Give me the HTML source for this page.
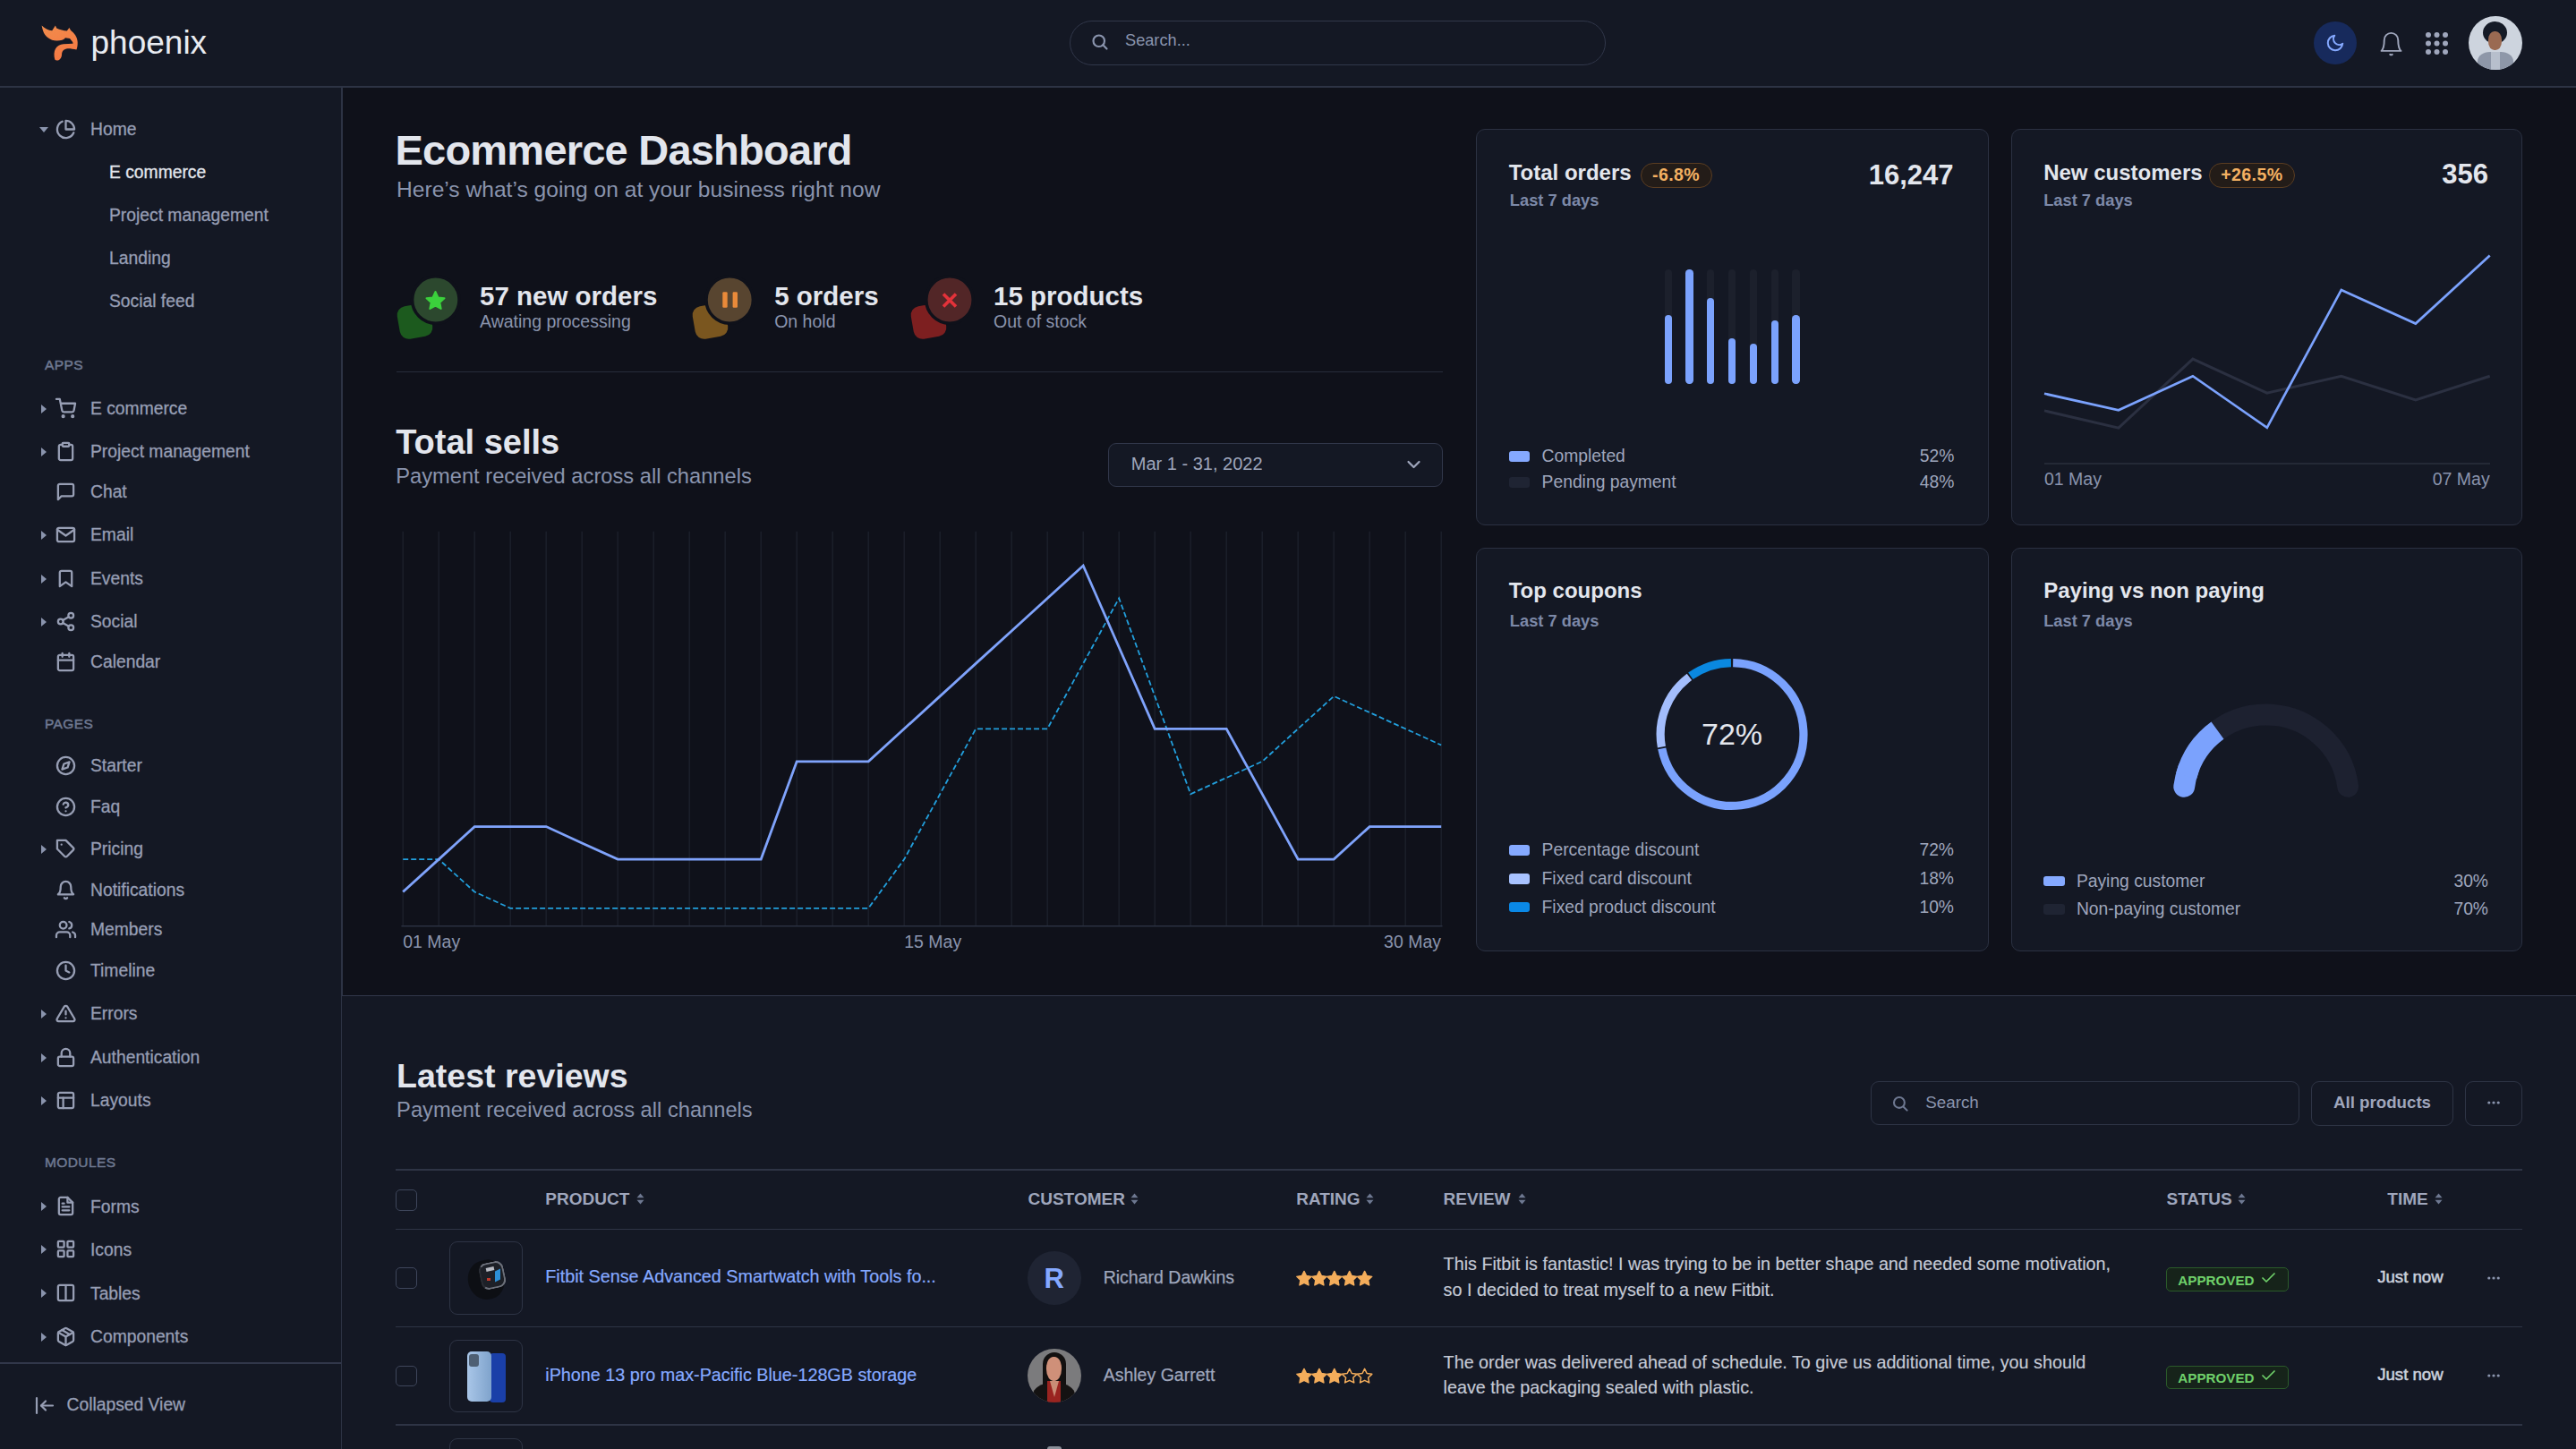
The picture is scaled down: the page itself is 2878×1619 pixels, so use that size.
<!DOCTYPE html>
<html><head><meta charset="utf-8">
<style>
*{margin:0;padding:0;box-sizing:border-box}
html,body{width:2878px;height:1619px;overflow:hidden;background:#0f111a;font-family:"Liberation Sans",sans-serif;color:#9fa6bc}
.a{position:absolute;white-space:nowrap;line-height:1}
svg{position:absolute;overflow:visible}
.ic{fill:none;stroke:#979eb4;stroke-width:2.4;stroke-linecap:round;stroke-linejoin:round}
#top{position:absolute;left:0;top:0;width:2878px;height:97.5px;background:#141824;border-bottom:2px solid #2d3344}
#side{position:absolute;left:0;top:97.5px;width:382.5px;height:1522px;background:#141824;border-right:2px solid #2d3344}
.nv{position:absolute;left:101px;font-size:19.3px;line-height:1;color:#979eb4;white-space:nowrap;-webkit-text-stroke:0.3px #979eb4}
.sub{position:absolute;left:122px;font-size:19.3px;line-height:1;color:#979eb4;white-space:nowrap;-webkit-text-stroke:0.3px #979eb4}
.hd{position:absolute;left:50px;font-size:15.5px;line-height:1;color:#6e7891;white-space:nowrap;letter-spacing:0.4px;-webkit-text-stroke:0.5px #6e7891}
.car{position:absolute;left:46px;width:0;height:0;border-top:5px solid transparent;border-bottom:5px solid transparent;border-left:6px solid #8a94ad}
.sico{position:absolute;left:62px;width:23px;height:23px}
</style></head>
<body>
<!-- TOP BAR -->
<div id="top"></div>
<!-- logo -->
<svg style="left:0;top:0" width="100" height="80" viewBox="0 0 100 80">
 <defs><linearGradient id="lg" x1="0" y1="0" x2="0.4" y2="1"><stop offset="0" stop-color="#f08c4c"/><stop offset="1" stop-color="#f67a44"/></linearGradient></defs>
 <path fill="url(#lg)" d="M46.6,28.6 C50,32 54,34 58.2,34.3 L61.9,28.6 L63.2,31.6 C67,33.3 71,34.3 74.8,34.6 L77.4,31 L79.1,33.9 C83,37 86.5,41 86.7,47 C86.8,51 86.3,53.5 85.4,55.5 C82,54.6 78,54 75.5,54.2 C71.5,54.6 69.2,57 69.1,60.5 C69,64 67.5,66.3 65.5,67.3 C63.5,67.8 62,67.5 61.3,66.5 C60,62 60.3,57.5 62,54.5 C64,51 67,49.6 71,49.3 L81.5,48.7 C81.5,47.5 81,46.5 80,45.5 L78,43 L73,42.3 C71.5,44.5 68,45.6 63.5,45.6 C56,45.6 50,40 48.5,35.5 C47.5,33 47,30.5 46.6,28.6 Z"/>
</svg>
<div class="a" style="left:101.5px;top:29px;font-size:37px;color:#e8ebf1;letter-spacing:0px">phoenix</div>
<!-- search -->
<div style="position:absolute;left:1195px;top:23px;width:599px;height:50px;border:1.5px solid #31374a;border-radius:25px;background:#141824"></div>
<svg class="ic" style="left:1219px;top:37px;stroke:#8a94ad;stroke-width:2.6" width="20" height="20" viewBox="0 0 24 24"><circle cx="10.5" cy="10.5" r="7.5"/><line x1="21" y1="21" x2="16" y2="16"/></svg>
<div class="a" style="left:1257px;top:36px;font-size:18.2px;color:#8a94ad">Search...</div>
<!-- right icons -->
<div style="position:absolute;left:2585px;top:24px;width:48px;height:48px;border-radius:50%;background:#172a5c"></div>
<svg class="ic" style="left:2598px;top:37px;stroke:#85a9ff;stroke-width:2.2" width="22" height="22" viewBox="0 0 24 24"><path d="M21 12.79A9 9 0 1 1 11.21 3 7 7 0 0 0 21 12.79z"/></svg>
<svg class="ic" style="left:2656px;top:33px;stroke:#9fa6bc;stroke-width:1.5" width="31" height="31" viewBox="0 0 24 24"><path d="M18 9A6 6 0 0 0 6 9c0 7-1.5 8.5-2.5 9.5h17c-1-1-2.5-2.5-2.5-9.5"/><path d="M13 21.5a1.5 1.5 0 0 1-2 0"/></svg>
<svg style="left:2710px;top:36px" width="25" height="25" viewBox="0 0 25 25" fill="#9fa6bc">
 <circle cx="3" cy="3" r="3"/><circle cx="12.5" cy="3" r="3"/><circle cx="22" cy="3" r="3"/>
 <circle cx="3" cy="12.5" r="3"/><circle cx="12.5" cy="12.5" r="3"/><circle cx="22" cy="12.5" r="3"/>
 <circle cx="3" cy="22" r="3"/><circle cx="12.5" cy="22" r="3"/><circle cx="22" cy="22" r="3"/>
</svg>
<div style="position:absolute;left:2758px;top:18px;width:60px;height:60px;border-radius:50%;background:#cdd4de;overflow:hidden">
 <div style="position:absolute;left:16px;top:6px;width:27px;height:25px;border-radius:50%;background:#141a26"></div>
 <div style="position:absolute;left:22px;top:17px;width:15px;height:21px;border-radius:45%;background:#9a6a52"></div>
 <div style="position:absolute;left:10px;top:40px;width:40px;height:30px;border-radius:35% 35% 0 0;background:#8e97a8"></div>
 <div style="position:absolute;left:25px;top:40px;width:10px;height:22px;background:#b7bfcc"></div>
</div>
</div>

<!-- SIDEBAR -->
<div id="side"></div>
<div class="nv" style="top:135.1px">Home</div>
<svg class="ic sico" style="top:132.9px" viewBox="0 0 24 24"><path d="M21.21 15.89A10 10 0 1 1 8 2.83"/><path d="M22 12A10 10 0 0 0 12 2v10z"/></svg>
<div class="car" style="left:44px;top:141.9px;border-left:5px solid transparent;border-right:5px solid transparent;border-top:6px solid #8a94ad;border-bottom:0"></div>
<div class="sub" style="top:183.1px;color:#e3e6ed;-webkit-text-stroke-color:#e3e6ed">E commerce</div>
<div class="sub" style="top:230.8px">Project management</div>
<div class="sub" style="top:279.1px">Landing</div>
<div class="sub" style="top:326.6px">Social feed</div>
<div class="hd" style="top:399.8px">APPS</div>
<div class="nv" style="top:447.2px">E commerce</div>
<svg class="ic sico" style="top:445.0px" viewBox="0 0 24 24"><circle cx="9" cy="21" r="1"/><circle cx="20" cy="21" r="1"/><path d="M1 1h4l2.68 13.39a2 2 0 0 0 2 1.61h9.72a2 2 0 0 0 2-1.61L23 6H6"/></svg>
<div class="car" style="top:452.0px"></div>
<div class="nv" style="top:495.0px">Project management</div>
<svg class="ic sico" style="top:492.8px" viewBox="0 0 24 24"><path d="M16 4h2a2 2 0 0 1 2 2v14a2 2 0 0 1-2 2H6a2 2 0 0 1-2-2V6a2 2 0 0 1 2-2h2"/><rect x="8" y="2" width="8" height="4" rx="1" ry="1"/></svg>
<div class="car" style="top:499.8px"></div>
<div class="nv" style="top:540.2px">Chat</div>
<svg class="ic sico" style="top:538.0px" viewBox="0 0 24 24"><path d="M21 15a2 2 0 0 1-2 2H7l-4 4V5a2 2 0 0 1 2-2h14a2 2 0 0 1 2 2z"/></svg>
<div class="nv" style="top:587.7px">Email</div>
<svg class="ic sico" style="top:585.5px" viewBox="0 0 24 24"><path d="M4 4h16c1.1 0 2 .9 2 2v12c0 1.1-.9 2-2 2H4c-1.1 0-2-.9-2-2V6c0-1.1.9-2 2-2z"/><polyline points="22,6 12,13 2,6"/></svg>
<div class="car" style="top:592.5px"></div>
<div class="nv" style="top:636.7px">Events</div>
<svg class="ic sico" style="top:634.5px" viewBox="0 0 24 24"><path d="M19 21l-7-5-7 5V5a2 2 0 0 1 2-2h10a2 2 0 0 1 2 2z"/></svg>
<div class="car" style="top:641.5px"></div>
<div class="nv" style="top:685.2px">Social</div>
<svg class="ic sico" style="top:683.0px" viewBox="0 0 24 24"><circle cx="18" cy="5" r="3"/><circle cx="6" cy="12" r="3"/><circle cx="18" cy="19" r="3"/><line x1="8.59" y1="13.51" x2="15.42" y2="17.49"/><line x1="15.41" y1="6.51" x2="8.59" y2="10.49"/></svg>
<div class="car" style="top:690.0px"></div>
<div class="nv" style="top:729.8px">Calendar</div>
<svg class="ic sico" style="top:727.6px" viewBox="0 0 24 24"><rect x="3" y="4" width="18" height="18" rx="2" ry="2"/><line x1="16" y1="2" x2="16" y2="6"/><line x1="8" y1="2" x2="8" y2="6"/><line x1="3" y1="10" x2="21" y2="10"/></svg>
<div class="hd" style="top:801.1px">PAGES</div>
<div class="nv" style="top:846.1px">Starter</div>
<svg class="ic sico" style="top:843.9px" viewBox="0 0 24 24"><circle cx="12" cy="12" r="10"/><polygon points="16.24 7.76 14.12 14.12 7.76 16.24 9.88 9.88 16.24 7.76"/></svg>
<div class="nv" style="top:892.1px">Faq</div>
<svg class="ic sico" style="top:889.9px" viewBox="0 0 24 24"><circle cx="12" cy="12" r="10"/><path d="M9.09 9a3 3 0 0 1 5.83 1c0 2-3 3-3 3"/><line x1="12" y1="17" x2="12.01" y2="17"/></svg>
<div class="nv" style="top:939.4px">Pricing</div>
<svg class="ic sico" style="top:937.2px" viewBox="0 0 24 24"><path d="M20.59 13.41l-7.17 7.17a2 2 0 0 1-2.83 0L2 12V2h10l8.59 8.59a2 2 0 0 1 0 2.82z"/><line x1="7" y1="7" x2="7.01" y2="7"/></svg>
<div class="car" style="top:944.2px"></div>
<div class="nv" style="top:984.8px">Notifications</div>
<svg class="ic sico" style="top:982.6px" viewBox="0 0 24 24"><path d="M18 8A6 6 0 0 0 6 8c0 7-3 9-3 9h18s-3-2-3-9"/><path d="M13.73 21a2 2 0 0 1-3.46 0"/></svg>
<div class="nv" style="top:1029.3px">Members</div>
<svg class="ic sico" style="top:1027.1px" viewBox="0 0 24 24"><path d="M17 21v-2a4 4 0 0 0-4-4H5a4 4 0 0 0-4 4v2"/><circle cx="9" cy="7" r="4"/><path d="M23 21v-2a4 4 0 0 0-3-3.87"/><path d="M16 3.13a4 4 0 0 1 0 7.75"/></svg>
<div class="nv" style="top:1074.7px">Timeline</div>
<svg class="ic sico" style="top:1072.5px" viewBox="0 0 24 24"><circle cx="12" cy="12" r="10"/><polyline points="12 6 12 12 16 14"/></svg>
<div class="nv" style="top:1122.9px">Errors</div>
<svg class="ic sico" style="top:1120.7px" viewBox="0 0 24 24"><path d="M10.29 3.86L1.82 18a2 2 0 0 0 1.71 3h16.94a2 2 0 0 0 1.71-3L13.71 3.86a2 2 0 0 0-3.42 0z"/><line x1="12" y1="9" x2="12" y2="13"/><line x1="12" y1="17" x2="12.01" y2="17"/></svg>
<div class="car" style="top:1127.7px"></div>
<div class="nv" style="top:1172.1px">Authentication</div>
<svg class="ic sico" style="top:1169.9px" viewBox="0 0 24 24"><rect x="3" y="11" width="18" height="11" rx="2" ry="2"/><path d="M7 11V7a5 5 0 0 1 10 0v4"/></svg>
<div class="car" style="top:1176.9px"></div>
<div class="nv" style="top:1219.7px">Layouts</div>
<svg class="ic sico" style="top:1217.5px" viewBox="0 0 24 24"><rect x="3" y="3" width="18" height="18" rx="2" ry="2"/><line x1="3" y1="9" x2="21" y2="9"/><line x1="9" y1="21" x2="9" y2="9"/></svg>
<div class="car" style="top:1224.5px"></div>
<div class="hd" style="top:1291.0px">MODULES</div>
<div class="nv" style="top:1338.5px">Forms</div>
<svg class="ic sico" style="top:1336.3px" viewBox="0 0 24 24"><path d="M14 2H6a2 2 0 0 0-2 2v16a2 2 0 0 0 2 2h12a2 2 0 0 0 2-2V8z"/><polyline points="14 2 14 8 20 8"/><line x1="16" y1="13" x2="8" y2="13"/><line x1="16" y1="17" x2="8" y2="17"/><polyline points="10 9 9 9 8 9"/></svg>
<div class="car" style="top:1343.3px"></div>
<div class="nv" style="top:1386.6px">Icons</div>
<svg class="ic sico" style="top:1384.4px" viewBox="0 0 24 24"><rect x="3" y="3" width="7" height="7" rx="1"/><rect x="14" y="3" width="7" height="7" rx="1"/><rect x="14" y="14" width="7" height="7" rx="1"/><rect x="3" y="14" width="7" height="7" rx="1"/></svg>
<div class="car" style="top:1391.4px"></div>
<div class="nv" style="top:1435.5px">Tables</div>
<svg class="ic sico" style="top:1433.3px" viewBox="0 0 24 24"><path d="M12 3h7a2 2 0 0 1 2 2v14a2 2 0 0 1-2 2h-7m0-18H5a2 2 0 0 0-2 2v14a2 2 0 0 0 2 2h7m0-18v18"/></svg>
<div class="car" style="top:1440.3px"></div>
<div class="nv" style="top:1483.7px">Components</div>
<svg class="ic sico" style="top:1481.5px" viewBox="0 0 24 24"><line x1="16.5" y1="9.4" x2="7.5" y2="4.21"/><path d="M21 16V8a2 2 0 0 0-1-1.73l-7-4a2 2 0 0 0-2 0l-7 4A2 2 0 0 0 3 8v8a2 2 0 0 0 1 1.73l7 4a2 2 0 0 0 2 0l7-4A2 2 0 0 0 21 16z"/><polyline points="3.27 6.96 12 12.01 20.73 6.96"/><line x1="12" y1="22.08" x2="12" y2="12"/></svg>
<div class="car" style="top:1488.5px"></div>
<div style="position:absolute;left:0;top:1522px;width:381px;height:1.5px;background:#31374a"></div>
<svg class="ic" style="left:39px;top:1560px;stroke-width:2.2" width="21" height="21" viewBox="0 0 21 21"><line x1="2" y1="2" x2="2" y2="19"/><line x1="7" y1="10.5" x2="20" y2="10.5"/><polyline points="12,5.5 7,10.5 12,15.5"/></svg>
<div class="nv" style="left:74.5px;top:1560.0px">Collapsed View</div>
<div style="position:absolute;left:382px;top:1111.5px;width:2496px;height:508px;background:#141824;border-top:1.5px solid #31374a"></div>
<div class="a" style="left:441.5px;top:143.8px;font-size:47px;color:#e3e6ed;font-weight:bold;letter-spacing:-0.78px;">Ecommerce Dashboard</div>
<div class="a" style="left:443px;top:200.4px;font-size:24.6px;color:#8a94ad;">Here’s what’s going on at your business right now</div>
<svg style="left:412px;top:294.5px" width="100" height="100" viewBox="412 294.5 100 100"><rect x="445" y="340" width="37" height="37" rx="10" fill="#1c5a1e" transform="rotate(-10 463.5 358.5)"/><circle cx="486.8" cy="334.5" r="26.2" fill="#2c482e" stroke="#0f111a" stroke-width="3.5"/><polygon points="486.50,325.50 489.46,331.92 496.49,332.76 491.29,337.56 492.67,344.49 486.50,341.04 480.33,344.49 481.71,337.56 476.51,332.76 483.54,331.92" fill="#3bd13c" stroke="#3bd13c" stroke-width="2" stroke-linejoin="round"/></svg>
<div class="a" style="left:536px;top:316.0px;font-size:29.5px;color:#e3e6ed;font-weight:bold;">57 new orders</div>
<div class="a" style="left:536px;top:349.8px;font-size:19.5px;color:#8a94ad;">Awating processing</div>
<svg style="left:742px;top:294.5px" width="100" height="100" viewBox="742 294.5 100 100"><rect x="775" y="340" width="37" height="37" rx="10" fill="#7a561f" transform="rotate(-10 793.5 358.5)"/><circle cx="815.2" cy="334.5" r="26.2" fill="#584530" stroke="#0f111a" stroke-width="3.5"/><rect x="807.3" y="325.8" width="5.4" height="17.5" rx="1.2" fill="#e98a3a"/><rect x="818.6" y="325.8" width="5.4" height="17.5" rx="1.2" fill="#e98a3a"/></svg>
<div class="a" style="left:865.2px;top:316.0px;font-size:29.5px;color:#e3e6ed;font-weight:bold;">5 orders</div>
<div class="a" style="left:865.2px;top:349.8px;font-size:19.5px;color:#8a94ad;">On hold</div>
<svg style="left:986px;top:294.5px" width="100" height="100" viewBox="986 294.5 100 100"><rect x="1019" y="340" width="37" height="37" rx="10" fill="#7d1f20" transform="rotate(-10 1037.5 358.5)"/><circle cx="1061" cy="334.5" r="26.2" fill="#522627" stroke="#0f111a" stroke-width="3.5"/><path d="M1054 328 L1068 342 M1068 328 L1054 342" stroke="#e3323a" stroke-width="3.6" stroke-linecap="butt"/></svg>
<div class="a" style="left:1110px;top:316.0px;font-size:29.5px;color:#e3e6ed;font-weight:bold;">15 products</div>
<div class="a" style="left:1110px;top:349.8px;font-size:19.5px;color:#8a94ad;">Out of stock</div>
<div style="position:absolute;left:442.6px;top:414.8px;width:1169px;height:1.5px;background:#272d3b"></div>
<div class="a" style="left:442.2px;top:474.6px;font-size:38px;color:#e3e6ed;font-weight:bold;">Total sells</div>
<div class="a" style="left:442.2px;top:520.6px;font-size:23.7px;color:#8a94ad;">Payment received across all channels</div>
<div style="position:absolute;left:1238px;top:494.8px;width:374px;height:49px;border:1.5px solid #31374a;border-radius:9px;background:#141824"></div>
<div class="a" style="left:1263.8px;top:508.1px;font-size:20px;color:#9fa6bc;">Mar 1 - 31, 2022</div>
<svg class="ic" style="left:1572px;top:514px;stroke:#9fa6bc;stroke-width:2.2" width="15" height="10" viewBox="0 0 15 10"><polyline points="1.5,2 7.5,8 13.5,2"/></svg>
<svg style="left:430px;top:580px" width="1200" height="470" viewBox="430 580 1200 470"><line x1="450.2" y1="593.8" x2="450.2" y2="1034" stroke="#1c202b" stroke-width="1.5"/><line x1="490.2" y1="593.8" x2="490.2" y2="1034" stroke="#1c202b" stroke-width="1.5"/><line x1="530.2" y1="593.8" x2="530.2" y2="1034" stroke="#1c202b" stroke-width="1.5"/><line x1="570.2" y1="593.8" x2="570.2" y2="1034" stroke="#1c202b" stroke-width="1.5"/><line x1="610.2" y1="593.8" x2="610.2" y2="1034" stroke="#1c202b" stroke-width="1.5"/><line x1="650.2" y1="593.8" x2="650.2" y2="1034" stroke="#1c202b" stroke-width="1.5"/><line x1="690.2" y1="593.8" x2="690.2" y2="1034" stroke="#1c202b" stroke-width="1.5"/><line x1="730.2" y1="593.8" x2="730.2" y2="1034" stroke="#1c202b" stroke-width="1.5"/><line x1="770.2" y1="593.8" x2="770.2" y2="1034" stroke="#1c202b" stroke-width="1.5"/><line x1="810.2" y1="593.8" x2="810.2" y2="1034" stroke="#1c202b" stroke-width="1.5"/><line x1="850.2" y1="593.8" x2="850.2" y2="1034" stroke="#1c202b" stroke-width="1.5"/><line x1="890.2" y1="593.8" x2="890.2" y2="1034" stroke="#1c202b" stroke-width="1.5"/><line x1="930.2" y1="593.8" x2="930.2" y2="1034" stroke="#1c202b" stroke-width="1.5"/><line x1="970.2" y1="593.8" x2="970.2" y2="1034" stroke="#1c202b" stroke-width="1.5"/><line x1="1010.2" y1="593.8" x2="1010.2" y2="1034" stroke="#1c202b" stroke-width="1.5"/><line x1="1050.2" y1="593.8" x2="1050.2" y2="1034" stroke="#1c202b" stroke-width="1.5"/><line x1="1090.2" y1="593.8" x2="1090.2" y2="1034" stroke="#1c202b" stroke-width="1.5"/><line x1="1130.2" y1="593.8" x2="1130.2" y2="1034" stroke="#1c202b" stroke-width="1.5"/><line x1="1170.2" y1="593.8" x2="1170.2" y2="1034" stroke="#1c202b" stroke-width="1.5"/><line x1="1210.2" y1="593.8" x2="1210.2" y2="1034" stroke="#1c202b" stroke-width="1.5"/><line x1="1250.2" y1="593.8" x2="1250.2" y2="1034" stroke="#1c202b" stroke-width="1.5"/><line x1="1290.2" y1="593.8" x2="1290.2" y2="1034" stroke="#1c202b" stroke-width="1.5"/><line x1="1330.2" y1="593.8" x2="1330.2" y2="1034" stroke="#1c202b" stroke-width="1.5"/><line x1="1370.2" y1="593.8" x2="1370.2" y2="1034" stroke="#1c202b" stroke-width="1.5"/><line x1="1410.2" y1="593.8" x2="1410.2" y2="1034" stroke="#1c202b" stroke-width="1.5"/><line x1="1450.2" y1="593.8" x2="1450.2" y2="1034" stroke="#1c202b" stroke-width="1.5"/><line x1="1490.2" y1="593.8" x2="1490.2" y2="1034" stroke="#1c202b" stroke-width="1.5"/><line x1="1530.2" y1="593.8" x2="1530.2" y2="1034" stroke="#1c202b" stroke-width="1.5"/><line x1="1570.2" y1="593.8" x2="1570.2" y2="1034" stroke="#1c202b" stroke-width="1.5"/><line x1="1610.2" y1="593.8" x2="1610.2" y2="1034" stroke="#1c202b" stroke-width="1.5"/><line x1="448.4" y1="1034.8" x2="1611.5" y2="1034.8" stroke="#2a3040" stroke-width="1.5"/><polyline points="450.2,960.1 490.2,960.1 530.2,996.5 570.2,1014.8 610.2,1014.8 650.2,1014.8 690.2,1014.8 730.2,1014.8 770.2,1014.8 810.2,1014.8 850.2,1014.8 890.2,1014.8 930.2,1014.8 970.2,1014.8 1010.2,960.1 1050.2,887.2 1090.2,814.3 1130.2,814.3 1170.2,814.3 1210.2,741.4 1250.2,668.5 1290.2,777.9 1330.2,887.2 1370.2,869.0 1410.2,850.8 1450.2,814.3 1490.2,777.9 1530.2,796.1 1570.2,814.3 1610.2,832.5" fill="none" stroke="#229fdc" stroke-width="1.8" stroke-dasharray="6 3"/><polyline points="450.2,996.5 490.2,960.1 530.2,923.6 570.2,923.6 610.2,923.6 650.2,941.9 690.2,960.1 730.2,960.1 770.2,960.1 810.2,960.1 850.2,960.1 890.2,850.8 930.2,850.8 970.2,850.8 1010.2,814.3 1050.2,777.9 1090.2,741.4 1130.2,705.0 1170.2,668.5 1210.2,632.0 1250.2,723.2 1290.2,814.3 1330.2,814.3 1370.2,814.3 1410.2,887.2 1450.2,960.1 1490.2,960.1 1530.2,923.6 1570.2,923.6 1610.2,923.6" fill="none" stroke="#7fa3fb" stroke-width="2.8" stroke-linejoin="miter"/></svg>
<div class="a" style="left:450.2px;top:1043.1px;font-size:19.5px;color:#8a94ad;">01 May</div>
<div class="a" style="left:1010.2px;top:1043.1px;font-size:19.5px;color:#8a94ad;">15 May</div>
<div class="a" style="left:1410px;width:200px;text-align:right;top:1043.1px;font-size:19.5px;color:#8a94ad">30 May</div>
<div style="position:absolute;left:1649px;top:144px;width:573px;height:443px;background:#141824;border:1.5px solid #2b3142;border-radius:10px"></div>
<div style="position:absolute;left:2246.5px;top:144px;width:571.5px;height:443px;background:#141824;border:1.5px solid #2b3142;border-radius:10px"></div>
<div style="position:absolute;left:1649px;top:612px;width:573px;height:451px;background:#141824;border:1.5px solid #2b3142;border-radius:10px"></div>
<div style="position:absolute;left:2246.5px;top:612px;width:571.5px;height:451px;background:#141824;border:1.5px solid #2b3142;border-radius:10px"></div>
<div class="a" style="left:1685.7px;top:180.9px;font-size:24px;color:#e3e6ed;font-weight:bold;">Total orders</div>
<div style="position:absolute;left:1832.5px;top:181.6px;width:80.70000000000005px;height:28.3px;border:1.5px solid #5a3d22;border-radius:15px;background:#231c18"></div>
<div class="a" style="left:1846px;top:185.7px;font-size:19.5px;color:#f3b062;font-weight:bold;letter-spacing:0.4px;">-6.8%</div>
<div class="a" style="left:1782.6px;width:400px;text-align:right;top:180.0px;font-size:31px;color:#e3e6ed;font-weight:bold;">16,247</div>
<div class="a" style="left:1686.8px;top:215.2px;font-size:18.3px;color:#7d89a8;font-weight:bold;">Last 7 days</div>
<div style="position:absolute;left:1859.95px;top:300.9px;width:8.3px;height:127.8px;border-radius:4.15px;background:#1c202c"></div>
<div style="position:absolute;left:1859.95px;top:352.1px;width:8.3px;height:76.6px;border-radius:4.15px;background:#7ba2fd"></div>
<div style="position:absolute;left:1883.45px;top:300.9px;width:8.3px;height:127.8px;border-radius:4.15px;background:#1c202c"></div>
<div style="position:absolute;left:1883.45px;top:300.9px;width:8.3px;height:127.8px;border-radius:4.15px;background:#7ba2fd"></div>
<div style="position:absolute;left:1907.05px;top:300.9px;width:8.3px;height:127.8px;border-radius:4.15px;background:#1c202c"></div>
<div style="position:absolute;left:1907.05px;top:333px;width:8.3px;height:95.7px;border-radius:4.15px;background:#7ba2fd"></div>
<div style="position:absolute;left:1930.95px;top:300.9px;width:8.3px;height:127.8px;border-radius:4.15px;background:#1c202c"></div>
<div style="position:absolute;left:1930.95px;top:377.8px;width:8.3px;height:50.9px;border-radius:4.15px;background:#7ba2fd"></div>
<div style="position:absolute;left:1954.75px;top:300.9px;width:8.3px;height:127.8px;border-radius:4.15px;background:#1c202c"></div>
<div style="position:absolute;left:1954.75px;top:384px;width:8.3px;height:44.7px;border-radius:4.15px;background:#7ba2fd"></div>
<div style="position:absolute;left:1978.55px;top:300.9px;width:8.3px;height:127.8px;border-radius:4.15px;background:#1c202c"></div>
<div style="position:absolute;left:1978.55px;top:358.3px;width:8.3px;height:70.4px;border-radius:4.15px;background:#7ba2fd"></div>
<div style="position:absolute;left:2002.35px;top:300.9px;width:8.3px;height:127.8px;border-radius:4.15px;background:#1c202c"></div>
<div style="position:absolute;left:2002.35px;top:352.1px;width:8.3px;height:76.6px;border-radius:4.15px;background:#7ba2fd"></div>
<div style="position:absolute;left:1685.8px;top:503.7px;width:23.7px;height:11.9px;border-radius:3px;background:#85a9ff"></div>
<div class="a" style="left:1722.6px;top:499.7px;font-size:19.3px;color:#9fa6bc;">Completed</div>
<div class="a" style="left:1783.4px;width:400px;text-align:right;top:499.7px;font-size:19.3px;color:#9fa6bc;">52%</div>
<div style="position:absolute;left:1685.8px;top:533.1px;width:23.7px;height:11.9px;border-radius:3px;background:#1f2433"></div>
<div class="a" style="left:1722.6px;top:529.1px;font-size:19.3px;color:#9fa6bc;">Pending payment</div>
<div class="a" style="left:1783.4px;width:400px;text-align:right;top:529.1px;font-size:19.3px;color:#9fa6bc;">48%</div>
<div class="a" style="left:2283.2px;top:180.7px;font-size:24px;color:#e3e6ed;font-weight:bold;">New customers</div>
<div style="position:absolute;left:2468px;top:181.6px;width:95.59999999999991px;height:28.3px;border:1.5px solid #5a3d22;border-radius:15px;background:#231c18"></div>
<div class="a" style="left:2481.3px;top:185.7px;font-size:19.5px;color:#f3b062;font-weight:bold;letter-spacing:0.4px;">+26.5%</div>
<div class="a" style="left:2380px;width:400px;text-align:right;top:179.2px;font-size:31px;color:#e3e6ed;font-weight:bold;">356</div>
<div class="a" style="left:2283.2px;top:215.2px;font-size:18.3px;color:#7d89a8;font-weight:bold;">Last 7 days</div>
<svg style="left:2270px;top:270px" width="530" height="260" viewBox="2270 270 530 260"><line x1="2284" y1="517.9" x2="2782" y2="517.9" stroke="#2a2f3d" stroke-width="1.5"/><polyline points="2284.0,458.9 2366.9,478.2 2449.9,401.1 2532.8,439.1 2615.8,420.2 2698.8,447 2781.7,420.2" fill="none" stroke="#2b3041" stroke-width="3"/><polyline points="2284.0,439.8 2366.9,458.3 2449.9,420.2 2532.8,477.8 2615.8,323.9 2698.8,361.6 2781.7,285.4" fill="none" stroke="#7ba2fd" stroke-width="2.7"/></svg>
<div class="a" style="left:2284px;top:526.1px;font-size:19.5px;color:#8a94ad;">01 May</div>
<div class="a" style="left:2381.7px;width:400px;text-align:right;top:526.1px;font-size:19.5px;color:#8a94ad;">07 May</div>
<div class="a" style="left:1685.7px;top:648.0px;font-size:24px;color:#e3e6ed;font-weight:bold;">Top coupons</div>
<div class="a" style="left:1686.8px;top:684.5px;font-size:18.3px;color:#7d89a8;font-weight:bold;">Last 7 days</div>
<svg style="left:1840px;top:725px" width="190" height="190" viewBox="1840 725 190 190"><path d="M1936.17 740.61 A79.9 79.9 0 1 1 1856.73 836.29" fill="none" stroke="#7aa2fd" stroke-width="9.2"/><path d="M1856.41 834.65 A79.9 79.9 0 0 1 1887.41 756.35" fill="none" stroke="#a3bdfc" stroke-width="9.2"/><path d="M1888.77 755.37 A79.9 79.9 0 0 1 1933.93 740.61" fill="none" stroke="#0a88e0" stroke-width="9.2"/></svg>
<div class="a" style="left:1835px;width:200px;text-align:center;top:803.1px;font-size:34px;color:#e3e6ed">72%</div>
<div style="position:absolute;left:1685.8px;top:944.4px;width:23.7px;height:11.9px;border-radius:3px;background:#85a9ff"></div>
<div class="a" style="left:1722.6px;top:940.4px;font-size:19.3px;color:#9fa6bc;">Percentage discount</div>
<div class="a" style="left:1783px;width:400px;text-align:right;top:940.4px;font-size:19.3px;color:#9fa6bc;">72%</div>
<div style="position:absolute;left:1685.8px;top:976.3px;width:23.7px;height:11.9px;border-radius:3px;background:#a8c2ff"></div>
<div class="a" style="left:1722.6px;top:972.3px;font-size:19.3px;color:#9fa6bc;">Fixed card discount</div>
<div class="a" style="left:1783px;width:400px;text-align:right;top:972.3px;font-size:19.3px;color:#9fa6bc;">18%</div>
<div style="position:absolute;left:1685.8px;top:1007.6px;width:23.7px;height:11.9px;border-radius:3px;background:#0a88e6"></div>
<div class="a" style="left:1722.6px;top:1003.6px;font-size:19.3px;color:#9fa6bc;">Fixed product discount</div>
<div class="a" style="left:1783px;width:400px;text-align:right;top:1003.6px;font-size:19.3px;color:#9fa6bc;">10%</div>
<div class="a" style="left:2283.2px;top:648.0px;font-size:24px;color:#e3e6ed;font-weight:bold;">Paying vs non paying</div>
<div class="a" style="left:2283.2px;top:684.5px;font-size:18.3px;color:#7d89a8;font-weight:bold;">Last 7 days</div>
<svg style="left:2400px;top:760px" width="270" height="160" viewBox="2400 760 270 160"><path d="M2440.22 878.88 A92.25 92.25 0 0 1 2623.18 878.88" fill="none" stroke="#1d2130" stroke-width="23.8" stroke-linecap="round"/><path d="M2440.22 878.88 A92.25 92.25 0 0 1 2445.01 859.20" fill="none" stroke="#7ba2fd" stroke-width="23.8" stroke-linecap="round"/><path d="M2442.59 866.87 A92.25 92.25 0 0 1 2477.48 816.12" fill="none" stroke="#7ba2fd" stroke-width="23.8" stroke-linecap="butt"/></svg>
<div style="position:absolute;left:2283.1px;top:978.6px;width:23.7px;height:11.9px;border-radius:3px;background:#85a9ff"></div>
<div class="a" style="left:2319.9px;top:974.6px;font-size:19.3px;color:#9fa6bc;">Paying customer</div>
<div class="a" style="left:2380px;width:400px;text-align:right;top:974.6px;font-size:19.3px;color:#9fa6bc;">30%</div>
<div style="position:absolute;left:2283.1px;top:1010.0px;width:23.7px;height:11.9px;border-radius:3px;background:#1f2433"></div>
<div class="a" style="left:2319.9px;top:1006.0px;font-size:19.3px;color:#9fa6bc;">Non-paying customer</div>
<div class="a" style="left:2380px;width:400px;text-align:right;top:1006.0px;font-size:19.3px;color:#9fa6bc;">70%</div>
<div class="a" style="left:443.1px;top:1184.0px;font-size:37.5px;color:#e3e6ed;font-weight:bold;">Latest reviews</div>
<div class="a" style="left:443.1px;top:1229.4px;font-size:23.7px;color:#8a94ad;">Payment received across all channels</div>
<div style="position:absolute;left:2090.2px;top:1208.1px;width:479px;height:48.6px;border:1.5px solid #2e3445;border-radius:9px;background:#141824"></div>
<svg class="ic" style="left:2113.5px;top:1224px;stroke:#6e7891;stroke-width:2.6" width="19" height="19" viewBox="0 0 24 24"><circle cx="10" cy="10" r="7.5"/><line x1="21" y1="21" x2="16" y2="16"/></svg>
<div class="a" style="left:2151.3px;top:1222.8px;font-size:18.8px;color:#8a94ad;">Search</div>
<div style="position:absolute;left:2582.2px;top:1208px;width:159.2px;height:49.6px;border:1.5px solid #2e3445;border-radius:9px"></div>
<div class="a" style="left:2607px;top:1222.9px;font-size:18.7px;color:#9fa6bc;font-weight:bold;">All products</div>
<div style="position:absolute;left:2754px;top:1208px;width:64px;height:49.6px;border:1.5px solid #2e3445;border-radius:9px"></div>
<svg style="left:2777px;top:1229.3px" width="18" height="6" viewBox="0 0 18 6" fill="#8a94ad"><circle cx="3.8" cy="3" r="1.6"/><circle cx="9" cy="3" r="1.6"/><circle cx="14.2" cy="3" r="1.6"/></svg>
<div style="position:absolute;left:442.3px;top:1306.35px;width:2375.8px;height:1.5px;background:#2e3445"></div>
<div style="position:absolute;left:442.3px;top:1372.65px;width:2375.8px;height:1.5px;background:#2e3445"></div>
<div style="position:absolute;left:442.3px;top:1481.75px;width:2375.8px;height:1.5px;background:#2e3445"></div>
<div style="position:absolute;left:442.3px;top:1591.45px;width:2375.8px;height:1.5px;background:#2e3445"></div>
<div style="position:absolute;left:442.3px;top:1329.1px;width:23.7px;height:23.7px;border:1.5px solid #3e465b;border-radius:5px"></div>
<div class="a" style="left:609.3px;top:1329.8px;font-size:19px;color:#9fa6bc;font-weight:bold;">PRODUCT</div>
<svg style="left:710.6px;top:1332.9px" width="9" height="13" viewBox="0 0 9 13" fill="#6e7891"><polygon points="4.5,0.5 8.5,5.3 0.5,5.3"/><polygon points="4.5,12.5 8.5,7.7 0.5,7.7"/></svg>
<div class="a" style="left:1148.5px;top:1329.8px;font-size:19px;color:#9fa6bc;font-weight:bold;">CUSTOMER</div>
<svg style="left:1262.6px;top:1332.9px" width="9" height="13" viewBox="0 0 9 13" fill="#6e7891"><polygon points="4.5,0.5 8.5,5.3 0.5,5.3"/><polygon points="4.5,12.5 8.5,7.7 0.5,7.7"/></svg>
<div class="a" style="left:1448.2px;top:1329.8px;font-size:19px;color:#9fa6bc;font-weight:bold;">RATING</div>
<svg style="left:1526.2px;top:1332.9px" width="9" height="13" viewBox="0 0 9 13" fill="#6e7891"><polygon points="4.5,0.5 8.5,5.3 0.5,5.3"/><polygon points="4.5,12.5 8.5,7.7 0.5,7.7"/></svg>
<div class="a" style="left:1612.6px;top:1329.8px;font-size:19px;color:#9fa6bc;font-weight:bold;">REVIEW</div>
<svg style="left:1696px;top:1332.9px" width="9" height="13" viewBox="0 0 9 13" fill="#6e7891"><polygon points="4.5,0.5 8.5,5.3 0.5,5.3"/><polygon points="4.5,12.5 8.5,7.7 0.5,7.7"/></svg>
<div class="a" style="left:2420.5px;top:1329.8px;font-size:19px;color:#9fa6bc;font-weight:bold;">STATUS</div>
<svg style="left:2500px;top:1332.9px" width="9" height="13" viewBox="0 0 9 13" fill="#6e7891"><polygon points="4.5,0.5 8.5,5.3 0.5,5.3"/><polygon points="4.5,12.5 8.5,7.7 0.5,7.7"/></svg>
<div class="a" style="left:2667.3px;top:1329.8px;font-size:19px;color:#9fa6bc;font-weight:bold;">TIME</div>
<svg style="left:2720.2px;top:1332.9px" width="9" height="13" viewBox="0 0 9 13" fill="#6e7891"><polygon points="4.5,0.5 8.5,5.3 0.5,5.3"/><polygon points="4.5,12.5 8.5,7.7 0.5,7.7"/></svg>
<div style="position:absolute;left:442.3px;top:1416.1px;width:23.7px;height:23.7px;border:1.5px solid #3e465b;border-radius:5px"></div>
<div style="position:absolute;left:502.2px;top:1387.0px;width:81.7px;height:81.8px;border:1.5px solid #2e3445;border-radius:9px;overflow:hidden"><div style="position:absolute;left:20px;top:20px;width:40px;height:44px;border-radius:48% 40% 45% 50%;background:#0d0f14;transform:rotate(-12deg)"></div><div style="position:absolute;left:33px;top:22px;width:28px;height:30px;border-radius:9px;background:#1d2027;border:2.5px solid #6d717b;border-left-color:#2a2d34;transform:rotate(-12deg)"></div><div style="position:absolute;left:40px;top:28px;width:9px;height:4px;background:#b9bcc4;transform:rotate(-12deg)"></div><div style="position:absolute;left:50px;top:31px;width:6px;height:12px;background:#2c8fd6;transform:skewY(-25deg)"></div><div style="position:absolute;left:41px;top:40px;width:4px;height:3px;background:#c0392b"></div></div>
<div class="a" style="left:609.3px;top:1417.1px;font-size:19.75px;color:#85a9ff;-webkit-text-stroke:0.2px #85a9ff">Fitbit Sense Advanced Smartwatch with Tools fo...</div>
<div style="position:absolute;left:1148px;top:1398px;width:59.6px;height:59.6px;border-radius:50%;background:#1f2433"></div><div class="a" style="left:1148px;width:59.6px;text-align:center;top:1412.5px;font-size:31px;font-weight:bold;color:#85a9ff">R</div>
<div class="a" style="left:1232.7px;top:1417.5px;font-size:19.5px;color:#9fa6bc;-webkit-text-stroke:0.25px #9fa6bc">Richard Dawkins</div>
<svg style="left:1440px;top:1412.9px" width="100" height="30" viewBox="1440 1412.9 100 30"><polygon points="1457.00,1420.30 1459.53,1425.42 1465.18,1426.24 1461.09,1430.23 1462.05,1435.86 1457.00,1433.20 1451.95,1435.86 1452.91,1430.23 1448.82,1426.24 1454.47,1425.42" fill="#f4ad5b" stroke="#f4ad5b" stroke-width="1.4" stroke-linejoin="round"/><polygon points="1473.90,1420.30 1476.43,1425.42 1482.08,1426.24 1477.99,1430.23 1478.95,1435.86 1473.90,1433.20 1468.85,1435.86 1469.81,1430.23 1465.72,1426.24 1471.37,1425.42" fill="#f4ad5b" stroke="#f4ad5b" stroke-width="1.4" stroke-linejoin="round"/><polygon points="1490.80,1420.30 1493.33,1425.42 1498.98,1426.24 1494.89,1430.23 1495.85,1435.86 1490.80,1433.20 1485.75,1435.86 1486.71,1430.23 1482.62,1426.24 1488.27,1425.42" fill="#f4ad5b" stroke="#f4ad5b" stroke-width="1.4" stroke-linejoin="round"/><polygon points="1507.70,1420.30 1510.23,1425.42 1515.88,1426.24 1511.79,1430.23 1512.75,1435.86 1507.70,1433.20 1502.65,1435.86 1503.61,1430.23 1499.52,1426.24 1505.17,1425.42" fill="#f4ad5b" stroke="#f4ad5b" stroke-width="1.4" stroke-linejoin="round"/><polygon points="1524.60,1420.30 1527.13,1425.42 1532.78,1426.24 1528.69,1430.23 1529.65,1435.86 1524.60,1433.20 1519.55,1435.86 1520.51,1430.23 1516.42,1426.24 1522.07,1425.42" fill="#f4ad5b" stroke="#f4ad5b" stroke-width="1.4" stroke-linejoin="round"/></svg>
<div class="a" style="left:1612.6px;top:1403.2px;font-size:19.75px;color:#c5cad6;-webkit-text-stroke:0.15px #c5cad6">This Fitbit is fantastic! I was trying to be in better shape and needed some motivation,</div>
<div class="a" style="left:1612.6px;top:1431.8px;font-size:19.75px;color:#c5cad6;-webkit-text-stroke:0.15px #c5cad6">so I decided to treat myself to a new Fitbit.</div>
<div style="position:absolute;left:2420.2px;top:1416.2px;width:136.9px;height:26.5px;border:1.5px solid #2b5a2a;border-radius:5px;background:#16231a"></div>
<div class="a" style="left:2433.3px;top:1422.6px;font-size:15.2px;color:#6fd06a;font-weight:bold;">APPROVED</div>
<svg class="ic" style="left:2527.2px;top:1421.9px;stroke:#6fd06a;stroke-width:1.7" width="15" height="11" viewBox="0 0 15 11"><polyline points="1,6 5,10 14,1"/></svg>
<div class="a" style="left:2329.6px;width:400px;text-align:right;top:1417.6px;font-size:18.6px;color:#cbd0dd;-webkit-text-stroke:0.55px #cbd0dd">Just now</div>
<svg style="left:2777px;top:1424.5px" width="18" height="6" viewBox="0 0 18 6" fill="#8a94ad"><circle cx="3.8" cy="3" r="1.6"/><circle cx="9" cy="3" r="1.6"/><circle cx="14.2" cy="3" r="1.6"/></svg>
<div style="position:absolute;left:442.3px;top:1525.6px;width:23.7px;height:23.7px;border:1.5px solid #3e465b;border-radius:5px"></div>
<div style="position:absolute;left:502.2px;top:1496.5px;width:81.7px;height:81.8px;border:1.5px solid #2e3445;border-radius:9px;overflow:hidden"><div style="position:absolute;left:44px;top:14px;width:18px;height:55px;border-radius:4px;background:#1a3fa8"></div><div style="position:absolute;left:19px;top:12px;width:27px;height:56px;border-radius:5px;background:linear-gradient(90deg,#a9c6e8,#7fa3cc)"></div><div style="position:absolute;left:21px;top:15px;width:11px;height:14px;border-radius:3px;background:#4e5f73"></div></div>
<div class="a" style="left:609.3px;top:1526.6px;font-size:19.75px;color:#85a9ff;-webkit-text-stroke:0.2px #85a9ff">iPhone 13 pro max-Pacific Blue-128GB storage</div>
<div style="position:absolute;left:1147.8px;top:1507px;width:60px;height:60px;border-radius:50%;background:#7b7b7d;overflow:hidden"><div style="position:absolute;left:17px;top:4px;width:26px;height:40px;border-radius:13px 13px 4px 4px;background:#121010"></div><div style="position:absolute;left:21px;top:8.5px;width:17.6px;height:27px;border-radius:45% 45% 48% 48%;background:#cf9079"></div><div style="position:absolute;left:6px;top:38px;width:47px;height:30px;border-radius:45% 45% 0 0;background:#141212"></div><div style="position:absolute;left:22px;top:36px;width:15px;height:26px;background:#9a2420"></div><div style="position:absolute;left:25px;top:36px;width:0;height:0;border-left:5px solid transparent;border-right:5px solid transparent;border-top:18px solid #c98d76"></div></div>
<div class="a" style="left:1232.7px;top:1527.0px;font-size:19.5px;color:#9fa6bc;-webkit-text-stroke:0.25px #9fa6bc">Ashley Garrett</div>
<svg style="left:1440px;top:1522.4px" width="100" height="30" viewBox="1440 1522.4 100 30"><polygon points="1457.00,1529.80 1459.53,1534.92 1465.18,1535.74 1461.09,1539.73 1462.05,1545.36 1457.00,1542.70 1451.95,1545.36 1452.91,1539.73 1448.82,1535.74 1454.47,1534.92" fill="#f4ad5b" stroke="#f4ad5b" stroke-width="1.4" stroke-linejoin="round"/><polygon points="1473.90,1529.80 1476.43,1534.92 1482.08,1535.74 1477.99,1539.73 1478.95,1545.36 1473.90,1542.70 1468.85,1545.36 1469.81,1539.73 1465.72,1535.74 1471.37,1534.92" fill="#f4ad5b" stroke="#f4ad5b" stroke-width="1.4" stroke-linejoin="round"/><polygon points="1490.80,1529.80 1493.33,1534.92 1498.98,1535.74 1494.89,1539.73 1495.85,1545.36 1490.80,1542.70 1485.75,1545.36 1486.71,1539.73 1482.62,1535.74 1488.27,1534.92" fill="#f4ad5b" stroke="#f4ad5b" stroke-width="1.4" stroke-linejoin="round"/><polygon points="1507.70,1529.80 1510.23,1534.92 1515.88,1535.74 1511.79,1539.73 1512.75,1545.36 1507.70,1542.70 1502.65,1545.36 1503.61,1539.73 1499.52,1535.74 1505.17,1534.92" fill="none" stroke="#f4ad5b" stroke-width="1.5" stroke-linejoin="round"/><polygon points="1524.60,1529.80 1527.13,1534.92 1532.78,1535.74 1528.69,1539.73 1529.65,1545.36 1524.60,1542.70 1519.55,1545.36 1520.51,1539.73 1516.42,1535.74 1522.07,1534.92" fill="none" stroke="#f4ad5b" stroke-width="1.5" stroke-linejoin="round"/></svg>
<div class="a" style="left:1612.6px;top:1512.7px;font-size:19.75px;color:#c5cad6;-webkit-text-stroke:0.15px #c5cad6">The order was delivered ahead of schedule. To give us additional time, you should</div>
<div class="a" style="left:1612.6px;top:1541.3px;font-size:19.75px;color:#c5cad6;-webkit-text-stroke:0.15px #c5cad6">leave the packaging sealed with plastic.</div>
<div style="position:absolute;left:2420.2px;top:1525.7px;width:136.9px;height:26.5px;border:1.5px solid #2b5a2a;border-radius:5px;background:#16231a"></div>
<div class="a" style="left:2433.3px;top:1532.1px;font-size:15.2px;color:#6fd06a;font-weight:bold;">APPROVED</div>
<svg class="ic" style="left:2527.2px;top:1531.4px;stroke:#6fd06a;stroke-width:1.7" width="15" height="11" viewBox="0 0 15 11"><polyline points="1,6 5,10 14,1"/></svg>
<div class="a" style="left:2329.6px;width:400px;text-align:right;top:1527.1px;font-size:18.6px;color:#cbd0dd;-webkit-text-stroke:0.55px #cbd0dd">Just now</div>
<svg style="left:2777px;top:1534.0px" width="18" height="6" viewBox="0 0 18 6" fill="#8a94ad"><circle cx="3.8" cy="3" r="1.6"/><circle cx="9" cy="3" r="1.6"/><circle cx="14.2" cy="3" r="1.6"/></svg>
<div style="position:absolute;left:502.2px;top:1606.7px;width:81.7px;height:60px;border:1.5px solid #2e3445;border-radius:9px"></div>
<div style="position:absolute;left:1170px;top:1616px;width:16px;height:8px;border-radius:3px;background:#8a8f99"></div>
</body></html>
